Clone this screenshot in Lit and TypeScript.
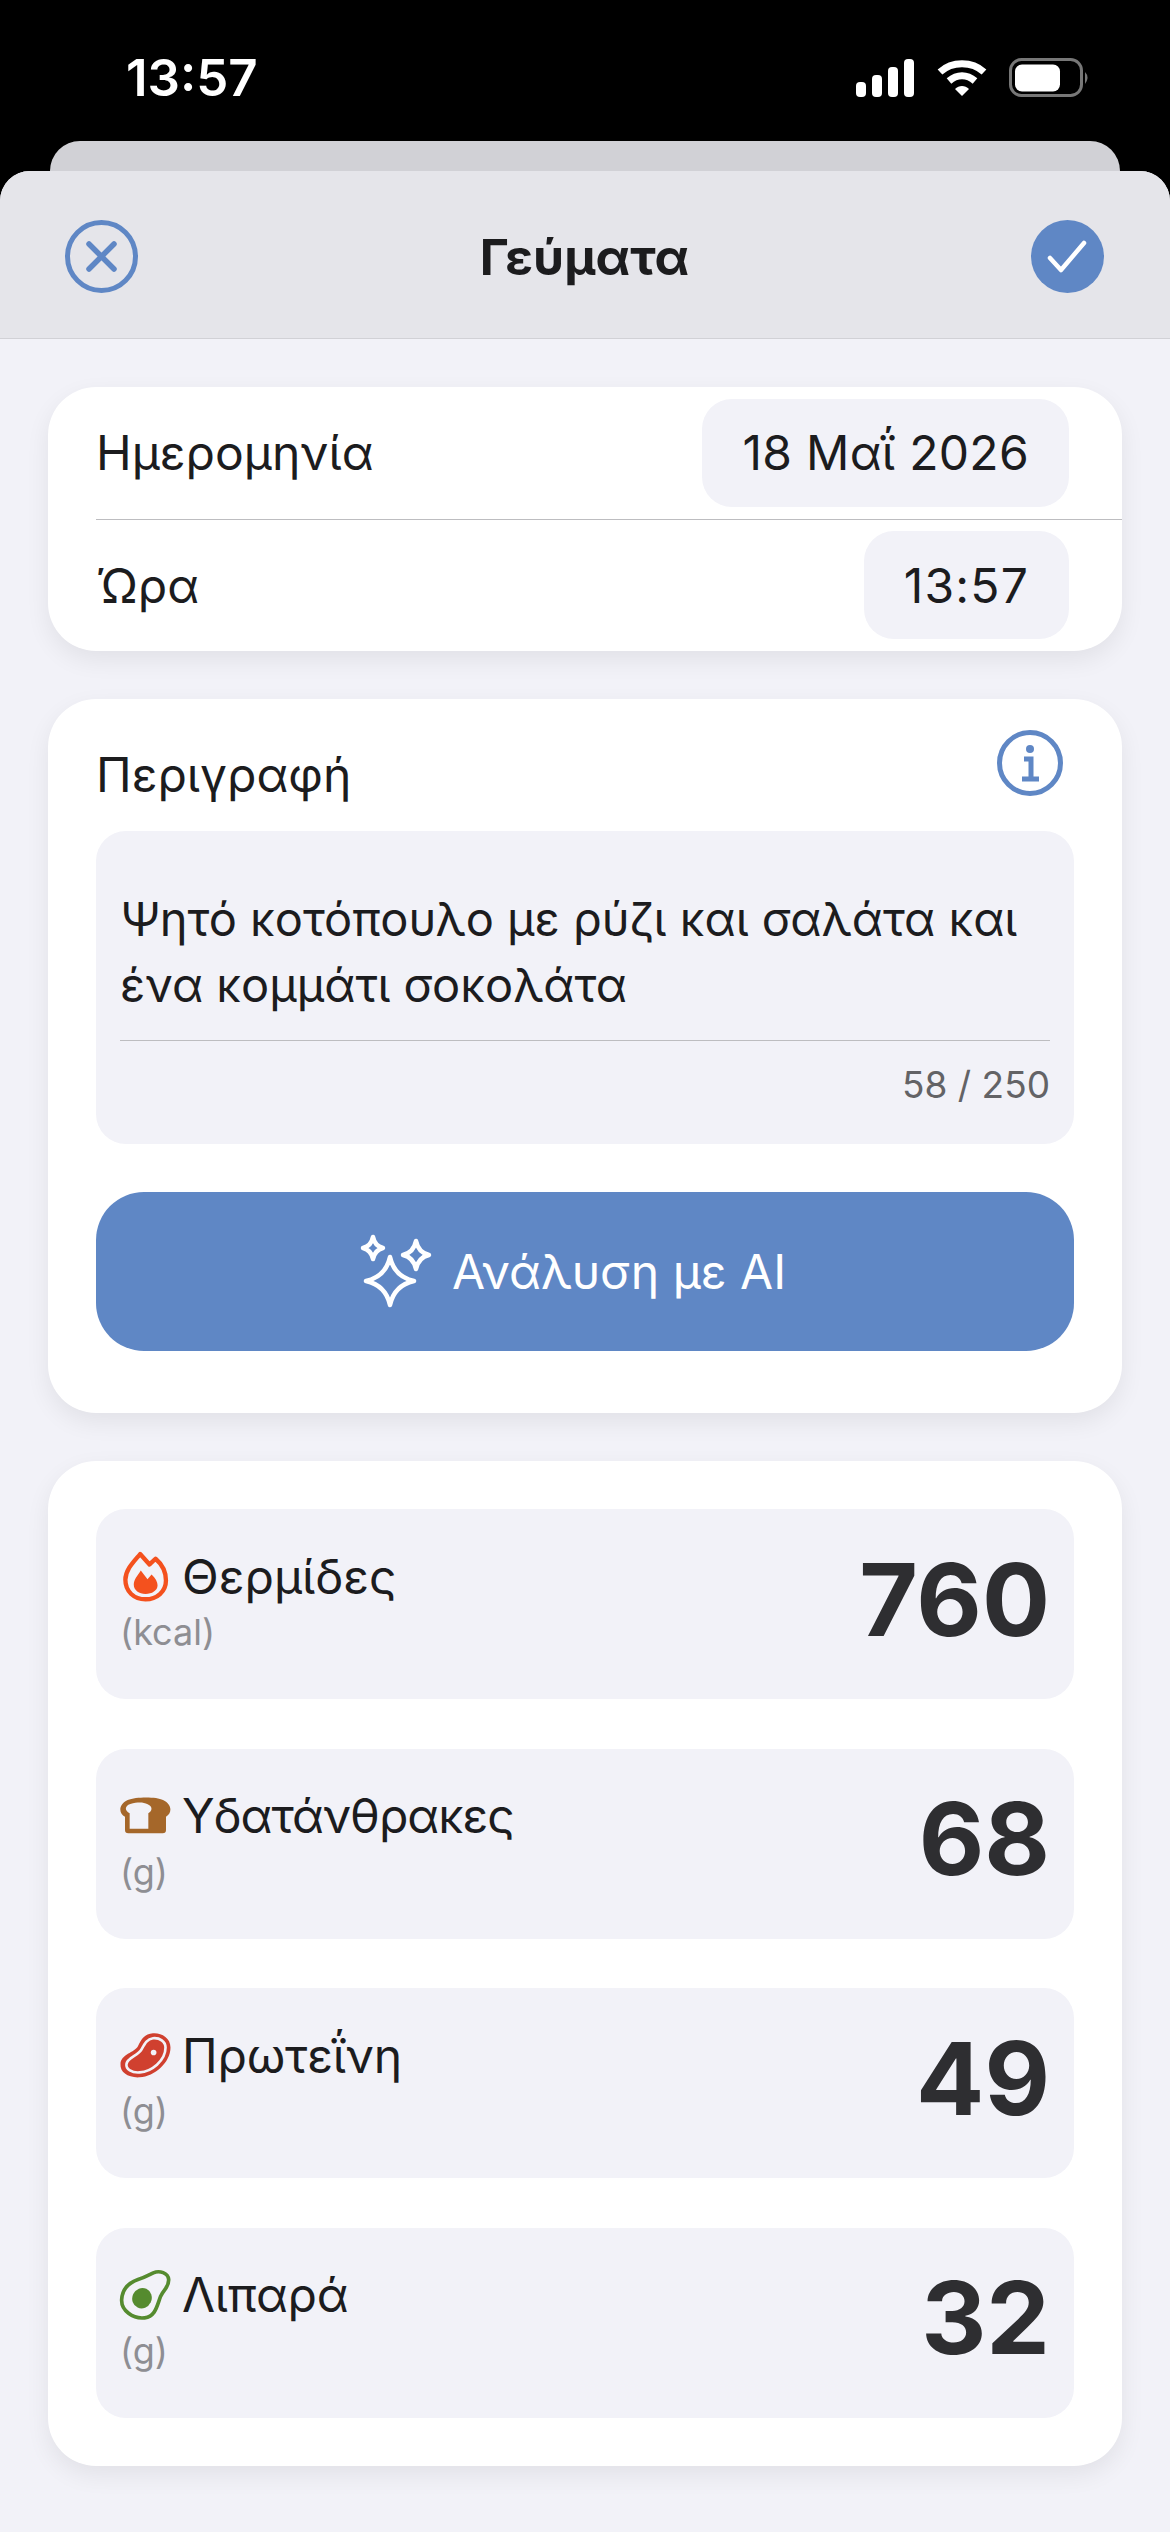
import { LitElement, html, css, svg } from "lit";
import { customElement } from "lit/decorators.js";

const flame = html`<svg class="ico" viewBox="60 55 155 170" width="52" height="57" style="margin-left:2px">
  <path d="M120 73 L148 104 L166 87 C186 104 197 126 197 152 C197 185 170 208 136 208 C102 208 76 185 76 150 C76 120 100 97 120 73 Z" fill="none" stroke="#f4511e" stroke-width="13" stroke-linejoin="round"/>
  <path d="M122 122 L142 148 L154 134 C166 145 172 156 172 166 C172 182 155 192 136 192 C117 192 101 182 101 164 C101 148 112 138 122 122 Z" fill="#f4511e"/>
</svg>`;
const bread = html`<svg class="ico" viewBox="55 80 165 120" width="55" height="40">
  <path d="M76 182 L76 142 C58 134 54 106 84 92 C110 82 170 82 190 92 C220 106 216 134 199 142 L199 182 Q199 192 189 192 L86 192 Q76 192 76 182 Z" fill="#a5672a"/>
  <path d="M90 178 L90 132 C75 124 74 110 92 104 C115 98 130 98 144 105 C160 112 158 125 146 132 L146 178 Z" fill="#f2f2f8"/>
</svg>`;
const meat = html`<svg class="ico" viewBox="55 65 165 145" width="55" height="48">
  <path d="M62 165 C60 190 85 207 120 205 C165 203 213 160 213 115 C213 85 185 70 160 72 C135 74 125 90 115 110 C105 130 62 135 62 165 Z" fill="#d0402f"/>
  <path d="M80 165 C78 180 96 192 120 190 C155 188 198 155 198 115 C198 96 180 85 160 87 C143 89 136 102 126 120 C116 140 82 145 80 165 Z" fill="none" stroke="#f2f2f8" stroke-width="8"/>
  <circle cx="162" cy="130" r="8.5" fill="#f2f2f8"/>
</svg>`;
const avocado = html`<svg class="ico" viewBox="55 58 165 158" width="55" height="53">
  <path d="M66 152 C64 185 100 211 135 207 C168 203 172 170 183 142 C192 122 208 115 207 92 C205 72 180 64 161 72 C145 80 135 86 115 92 C86 102 68 122 66 152 Z" fill="none" stroke="#558b2f" stroke-width="11"/>
  <ellipse cx="127" cy="148" rx="29" ry="31" transform="rotate(25 127 148)" fill="#558b2f"/>
</svg>`;

const rows = [
  { icon: flame, label: "Θερμίδες", unit: "(kcal)", value: "760", ls: 0 },
  { icon: bread, label: "Υδατάνθρακες", unit: "(g)", value: "68", ls: -1 },
  { icon: meat, label: "Πρωτεΐνη", unit: "(g)", value: "49", ls: -0.2 },
  { icon: avocado, label: "Λιπαρά", unit: "(g)", value: "32", ls: -0.3 },
];

const star = (cx: number, cy: number, rx: number, ry: number) => {
  const kx = rx * 0.18, ky = ry * 0.18;
  return svg`<path d="M${cx} ${cy - ry} Q${cx + kx} ${cy - ky} ${cx + rx} ${cy} Q${cx + kx} ${cy + ky} ${cx} ${cy + ry} Q${cx - kx} ${cy + ky} ${cx - rx} ${cy} Q${cx - kx} ${cy - ky} ${cx} ${cy - ry} Z"/>`;
};

@customElement("app-root")
export class AppRoot extends LitElement {
  static styles = css`
    :host { display: block; width: 1170px; height: 2532px; background: #000; overflow: hidden;
      font-family: Inter, "Noto Sans", sans-serif; color: #1c1c1e; }
    .status { height: 141px; display: flex; align-items: flex-start; justify-content: space-between; box-sizing: border-box; }
    .time { margin: 51px 0 0 126px; color: #fff; font-size: 51px; line-height: 54px; font-weight: 600; }
    .sys { margin: 58px 79px 0 0; display: flex; align-items: center; gap: 23px; }
    .sys svg { display: block; }
    .back { height: 30px; margin: 0 50px; background: #d1d1d6; border-radius: 30px 30px 0 0; }
    .sheet { background: #f2f2f8; border-radius: 30px 30px 0 0; height: 2361px; overflow: hidden; }
    .head { height: 168px; box-sizing: border-box; background: #e5e5ea; border-bottom: 1px solid #d1d1d6;
      display: flex; align-items: center; justify-content: space-between; padding: 4px 66px 0 65px; }
    .head svg { display: block; }
    .title { font-size: 50px; font-weight: 700; }
    .content { padding: 48px 48px 0; display: flex; flex-direction: column; gap: 48px; }
    .card { background: #fff; border-radius: 48px; box-shadow: 0 9px 24px rgba(0,0,0,0.07); }
    .meta { height: 264px; display: flex; flex-direction: column; }
    .mrow { flex: 1; margin-left: 48px; padding-right: 53px; display: flex; align-items: center; justify-content: space-between; font-size: 48px; }
    .mrow + .mrow { border-top: 1px solid #bdbdc0; }
    .pill { height: 108px; display: flex; align-items: center; padding: 0 40px; background: #f2f2f8; border-radius: 30px; letter-spacing: 0.3px; }
    .pill.clock { letter-spacing: 1.2px; }
    .desc { height: 714px; box-sizing: border-box; padding: 31px 48px 0; }
    .dtop { height: 101px; display: flex; justify-content: space-between; font-size: 48px; }
    .dtop span { margin-top: 12px; line-height: 66px; }
    .dtop svg { margin: 0 11px 0 0; display: block; }
    .area { height: 313px; box-sizing: border-box; background: #f2f2f8; border-radius: 30px; padding: 55px 24px 0; }
    .text { font-size: 47px; line-height: 66px; height: 155px; box-sizing: border-box; border-bottom: 1px solid #bdbdc0; }
    .count { text-align: right; font-size: 37px; color: #636366; margin-top: 21px; line-height: 46px; }
    .btn { margin-top: 48px; height: 159px; background: #5f87c5; border-radius: 48px; color: #fff; font-size: 48px;
      display: flex; align-items: center; justify-content: center; }
    .btn svg { overflow: visible; display: block; fill: none; stroke: #fff; stroke-width: 4.5; stroke-linejoin: round; }
    .macros { padding: 48px; display: flex; flex-direction: column; gap: 49.5px; height: 1005px; box-sizing: border-box; }
    .row { height: 190px; background: #f2f2f8; border-radius: 30px; display: flex; align-items: center; justify-content: space-between; padding: 0 24px 0 24px; }
    .left { padding-bottom: 10px; }
    .lhead { display: flex; align-items: center; gap: 12px; height: 66px; font-size: 48px; }
    .icobox { width: 50px; display: flex; justify-content: center; }
    .ico { display: block; flex: none; }
    .unit { font-size: 36px; color: #8e8e93; line-height: 46px; }
    .val { font-size: 101px; font-weight: 700; color: #2e2e31; line-height: 1; padding-bottom: 10px; }
  `;

  render() {
    return html`
      <div class="status">
        <div class="time">13:57</div>
        <div class="sys">
          <svg width="58" height="38" viewBox="0 0 58 38" fill="#fff">
            <rect x="0" y="23" width="10" height="15" rx="4"/><rect x="16" y="16" width="10" height="22" rx="4"/>
            <rect x="32" y="8" width="10" height="30" rx="4"/><rect x="48" y="0" width="10" height="38" rx="4"/>
          </svg>
          <svg width="50" height="38" viewBox="0 0 50 38" fill="none" stroke="#fff">
            <path d="M3 13 C15 2 35 2 47 13" stroke-width="7"/>
            <path d="M12 22 C20 15 30 15 38 22" stroke-width="7"/>
            <path d="M18 30 L25 37 L32 30 C28 26 22 26 18 30 Z" fill="#fff" stroke="none"/>
          </svg>
          <svg width="82" height="40" viewBox="0 0 82 40" style="margin-left:-1px">
            <rect x="1.5" y="1.5" width="71" height="36" rx="11" fill="none" stroke="#777" stroke-width="3"/>
            <rect x="6" y="6.5" width="45" height="27" rx="7" fill="#fff"/>
            <path d="M76 14 Q81 19 76 26 Z" fill="#777"/>
          </svg>
        </div>
      </div>
      <div class="back"></div>
      <div class="sheet">
        <div class="head">
          <svg width="73" height="73" viewBox="0 0 73 73" fill="none" stroke="#5f87c5">
            <circle cx="36.5" cy="36.5" r="34" stroke-width="5"/>
            <path d="M24 24 L49 49 M49 24 L24 49" stroke-width="5.5" stroke-linecap="round"/>
          </svg>
          <div class="title">Γεύματα</div>
          <svg width="73" height="73" viewBox="0 0 73 73" fill="none">
            <circle cx="36.5" cy="36.5" r="36.5" fill="#5f87c5"/>
            <path d="M19 38 L30 50 L53 23" stroke="#fff" stroke-width="4.5" stroke-linecap="round" stroke-linejoin="round"/>
          </svg>
        </div>
        <div class="content">
          <div class="card meta">
            <div class="mrow"><span>Ημερομηνία</span><span class="pill">18 Μαΐ 2026</span></div>
            <div class="mrow"><span>Ώρα</span><span class="pill clock">13:57</span></div>
          </div>
          <div class="card desc">
            <div class="dtop">
              <span>Περιγραφή</span>
              <svg width="66" height="66" viewBox="0 0 66 66" fill="none" stroke="#5f87c5">
                <circle cx="33" cy="33" r="30.5" stroke-width="5"/>
                <circle cx="33" cy="19" r="4" fill="#5f87c5" stroke="none"/>
                <path d="M27 29 H34 V48 M25 49 H42" stroke-width="5"/>
              </svg>
            </div>
            <div class="area">
              <div class="text">Ψητό κοτόπουλο με ρύζι και σαλάτα και ένα κομμάτι σοκολάτα</div>
              <div class="count">58 / 250</div>
            </div>
            <div class="btn">
              <svg width="68" height="80" viewBox="385 1232 68 80">
                ${star(374, 1248, 10, 11)}${star(417, 1255, 13, 14)}${star(391, 1281, 24, 24)}
              </svg>
              <span>Ανάλυση με AI</span>
            </div>
          </div>
          <div class="card macros">
            ${rows.map((r) => html`
              <div class="row">
                <div class="left">
                  <div class="lhead"><span class="icobox">${r.icon}</span><span style="letter-spacing:${r.ls}px">${r.label}</span></div>
                  <div class="unit">${r.unit}</div>
                </div>
                <div class="val">${r.value}</div>
              </div>`)}
          </div>
        </div>
      </div>
    `;
  }
}
